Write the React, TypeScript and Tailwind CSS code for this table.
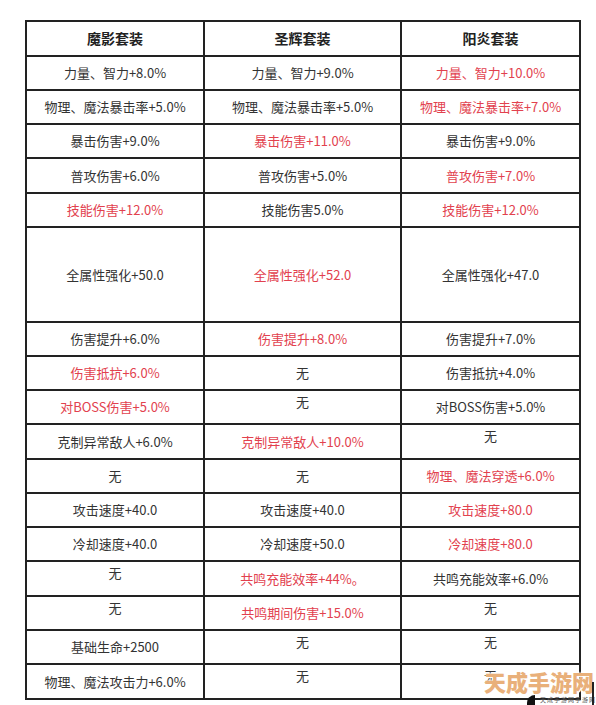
type Cell = { t: string; red?: boolean; up?: boolean };

const rows: { h: string; cells: Cell[] }[] = [
  { h: "h-[34px]", cells: [{ t: "力量、智力+8.0%" }, { t: "力量、智力+9.0%" }, { t: "力量、智力+10.0%", red: true }] },
  { h: "h-[34px]", cells: [{ t: "物理、魔法暴击率+5.0%" }, { t: "物理、魔法暴击率+5.0%" }, { t: "物理、魔法暴击率+7.0%", red: true }] },
  { h: "h-[34px]", cells: [{ t: "暴击伤害+9.0%" }, { t: "暴击伤害+11.0%", red: true }, { t: "暴击伤害+9.0%" }] },
  { h: "h-[35px]", cells: [{ t: "普攻伤害+6.0%" }, { t: "普攻伤害+5.0%" }, { t: "普攻伤害+7.0%", red: true }] },
  { h: "h-[34px]", cells: [{ t: "技能伤害+12.0%", red: true }, { t: "技能伤害5.0%" }, { t: "技能伤害+12.0%", red: true }] },
  { h: "h-[95px]", cells: [{ t: "全属性强化+50.0" }, { t: "全属性强化+52.0", red: true }, { t: "全属性强化+47.0" }] },
  { h: "h-[34px]", cells: [{ t: "伤害提升+6.0%" }, { t: "伤害提升+8.0%", red: true }, { t: "伤害提升+7.0%" }] },
  { h: "h-[34px]", cells: [{ t: "伤害抵抗+6.0%", red: true }, { t: "无" }, { t: "伤害抵抗+4.0%" }] },
  { h: "h-[34px]", cells: [{ t: "对BOSS伤害+5.0%", red: true }, { t: "无", up: true }, { t: "对BOSS伤害+5.0%" }] },
  { h: "h-[35px]", cells: [{ t: "克制异常敌人+6.0%" }, { t: "克制异常敌人+10.0%", red: true }, { t: "无", up: true }] },
  { h: "h-[34px]", cells: [{ t: "无" }, { t: "无" }, { t: "物理、魔法穿透+6.0%", red: true }] },
  { h: "h-[34px]", cells: [{ t: "攻击速度+40.0" }, { t: "攻击速度+40.0" }, { t: "攻击速度+80.0", red: true }] },
  { h: "h-[34px]", cells: [{ t: "冷却速度+40.0" }, { t: "冷却速度+50.0" }, { t: "冷却速度+80.0", red: true }] },
  { h: "h-[35px]", cells: [{ t: "无", up: true }, { t: "共鸣充能效率+44%。", red: true }, { t: "共鸣充能效率+6.0%" }] },
  { h: "h-[34px]", cells: [{ t: "无", up: true }, { t: "共鸣期间伤害+15.0%", red: true }, { t: "无", up: true }] },
  { h: "h-[34px]", cells: [{ t: "基础生命+2500" }, { t: "无", up: true }, { t: "无", up: true }] },
  { h: "h-[35px]", cells: [{ t: "物理、魔法攻击力+6.0%" }, { t: "无", up: true }, { t: "无", up: true }] },
];

const headers = ["魔影套装", "圣辉套装", "阳炎套装"];

export default function App() {
  return (
    <div
      className="relative w-[596px] h-[705px] bg-white overflow-hidden"
      style={{ fontFamily: '"Noto Sans CJK SC", "Noto Sans", sans-serif' }}
    >
      <div className="pt-[20px] pl-[25px]">
        <div className="grid grid-cols-[178px_197px_179px] w-[556px] border-t-2 border-l-2 border-[#222]">
          {headers.map((h) => (
            <div
              key={h}
              className="h-[35px] flex items-center justify-center border-r-2 border-b-2 border-[#222] text-[14px] font-bold text-[#222]"
            >
              {h}
            </div>
          ))}
          {rows.map((r, i) =>
            r.cells.map((c, j) => (
              <div
                key={`${i}-${j}`}
                className={`${r.h} flex justify-center border-r-2 border-b-2 border-[#222] text-[13px] ${
                  c.up ? "items-start pt-[1px]" : "items-center"
                } ${c.red ? "text-[#e2414e]" : "text-[#333]"}`}
              >
                {c.t}
              </div>
            ))
          )}
        </div>
      </div>

      {/* watermark */}
      <div
        className="absolute left-[484px] top-[670px] text-[22px] font-black text-[#e9b07a] leading-none"
        style={{ textShadow: "0 0 2px #fff, 0 0 2px #fff, 1px 1px 0 #fff" }}
      >
        天成手游网
      </div>
      <div className="absolute left-[527px] top-[695px] w-[8px] h-[10px] bg-[#111] rounded-tl-full" />
      <div className="absolute left-[540px] top-[697px] text-[6px] leading-none text-[#555] tracking-[1px]">
        天成手游网手游网
      </div>
      <div className="absolute left-[592px] top-[682px] w-[2px] h-[23px] bg-[#222]" />
    </div>
  );
}
